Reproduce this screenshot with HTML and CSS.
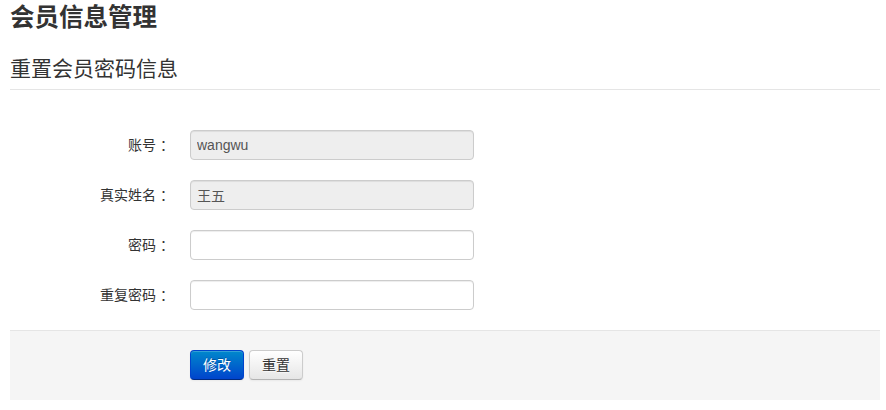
FILE: index.html
```html
<!DOCTYPE html>
<html lang="zh-CN">
<head>
  <meta charset="UTF-8">
  <title>会员信息管理</title>
  <link rel="stylesheet" href="styles.css">
</head>
<body>
  <div class="page">
    <h3 class="page-title">会员信息管理</h3>

    <form class="form-horizontal">
      <fieldset>
        <legend>重置会员密码信息</legend>

        <div class="control-group">
          <label class="control-label">账号<span class="colon">：</span></label>
          <div class="controls">
            <input type="text" class="input-xlarge" value="wangwu" disabled>
          </div>
        </div>

        <div class="control-group">
          <label class="control-label">真实姓名<span class="colon">：</span></label>
          <div class="controls">
            <input type="text" class="input-xlarge" value="王五" disabled>
          </div>
        </div>

        <div class="control-group">
          <label class="control-label">密码<span class="colon">：</span></label>
          <div class="controls">
            <input type="password" class="input-xlarge">
          </div>
        </div>

        <div class="control-group">
          <label class="control-label">重复密码<span class="colon">：</span></label>
          <div class="controls">
            <input type="password" class="input-xlarge">
          </div>
        </div>

        <div class="form-actions">
          <button type="submit" class="btn btn-primary">修改</button>
          <button type="reset" class="btn">重置</button>
        </div>
      </fieldset>
    </form>
  </div>
</body>
</html>
```

FILE: styles.css
```css
* {
  box-sizing: border-box;
}

body {
  margin: 0;
  font-family: "Liberation Sans", "Noto Sans CJK SC", sans-serif;
  font-size: 14px;
  line-height: 20px;
  color: #333;
  background: #fff;
}

.page {
  width: 870px;
  margin-left: 10px;
}

.page-title {
  margin: 0 0 14px;
  font-size: 24.5px;
  line-height: 35px;
  font-weight: bold;
  color: #333;
}

fieldset {
  margin: 0;
  padding: 0;
  border: 0;
}

legend {
  display: block;
  width: 100%;
  padding: 0;
  font-size: 21px;
  line-height: 40px;
  color: #333;
  border-bottom: 1px solid #e5e5e5;
}

.form-horizontal fieldset > .control-group:first-of-type {
  margin-top: 40px;
}

.control-group {
  display: flex;
  margin-bottom: 20px;
}

.control-label {
  width: 160px;
  padding-top: 5px;
  text-align: right;
  flex-shrink: 0;
}

/* full-width colon sits centred in its box, as in the original font */
.colon {
  padding-left: 4px;
  margin-right: -4px;
}

.controls {
  margin-left: 20px;
}

.input-xlarge {
  display: block;
  width: 284px;
  height: 30px;
  padding: 4px 6px;
  font-family: inherit;
  font-size: 14px;
  line-height: 20px;
  color: #555;
  background: #fff;
  border: 1px solid #ccc;
  border-radius: 4px;
  box-shadow: inset 0 1px 1px rgba(0, 0, 0, 0.075);
  outline: none;
}

.input-xlarge[disabled] {
  background: #eee;
  color: #555;
}

.form-actions {
  display: flex;
  gap: 5px;
  padding: 19px 20px 20px 180px;
  background: #f5f5f5;
  border-top: 1px solid #e5e5e5;
}

.btn {
  height: 30px;
  padding: 4px 12px;
  font-family: inherit;
  font-size: 14px;
  line-height: 20px;
  color: #333;
  text-shadow: 0 1px 1px rgba(255, 255, 255, 0.75);
  background: linear-gradient(to bottom, #fff, #e6e6e6);
  border: 1px solid #ccc;
  border-bottom-color: #b3b3b3;
  border-radius: 4px;
  box-shadow: inset 0 1px 0 rgba(255, 255, 255, 0.2), 0 1px 2px rgba(0, 0, 0, 0.05);
  cursor: pointer;
}

.btn-primary {
  color: #fff;
  text-shadow: 0 -1px 0 rgba(0, 0, 0, 0.25);
  background: linear-gradient(to bottom, #0088cc, #0044cc);
  border-color: #0044cc #0044cc #002a80;
}
```
